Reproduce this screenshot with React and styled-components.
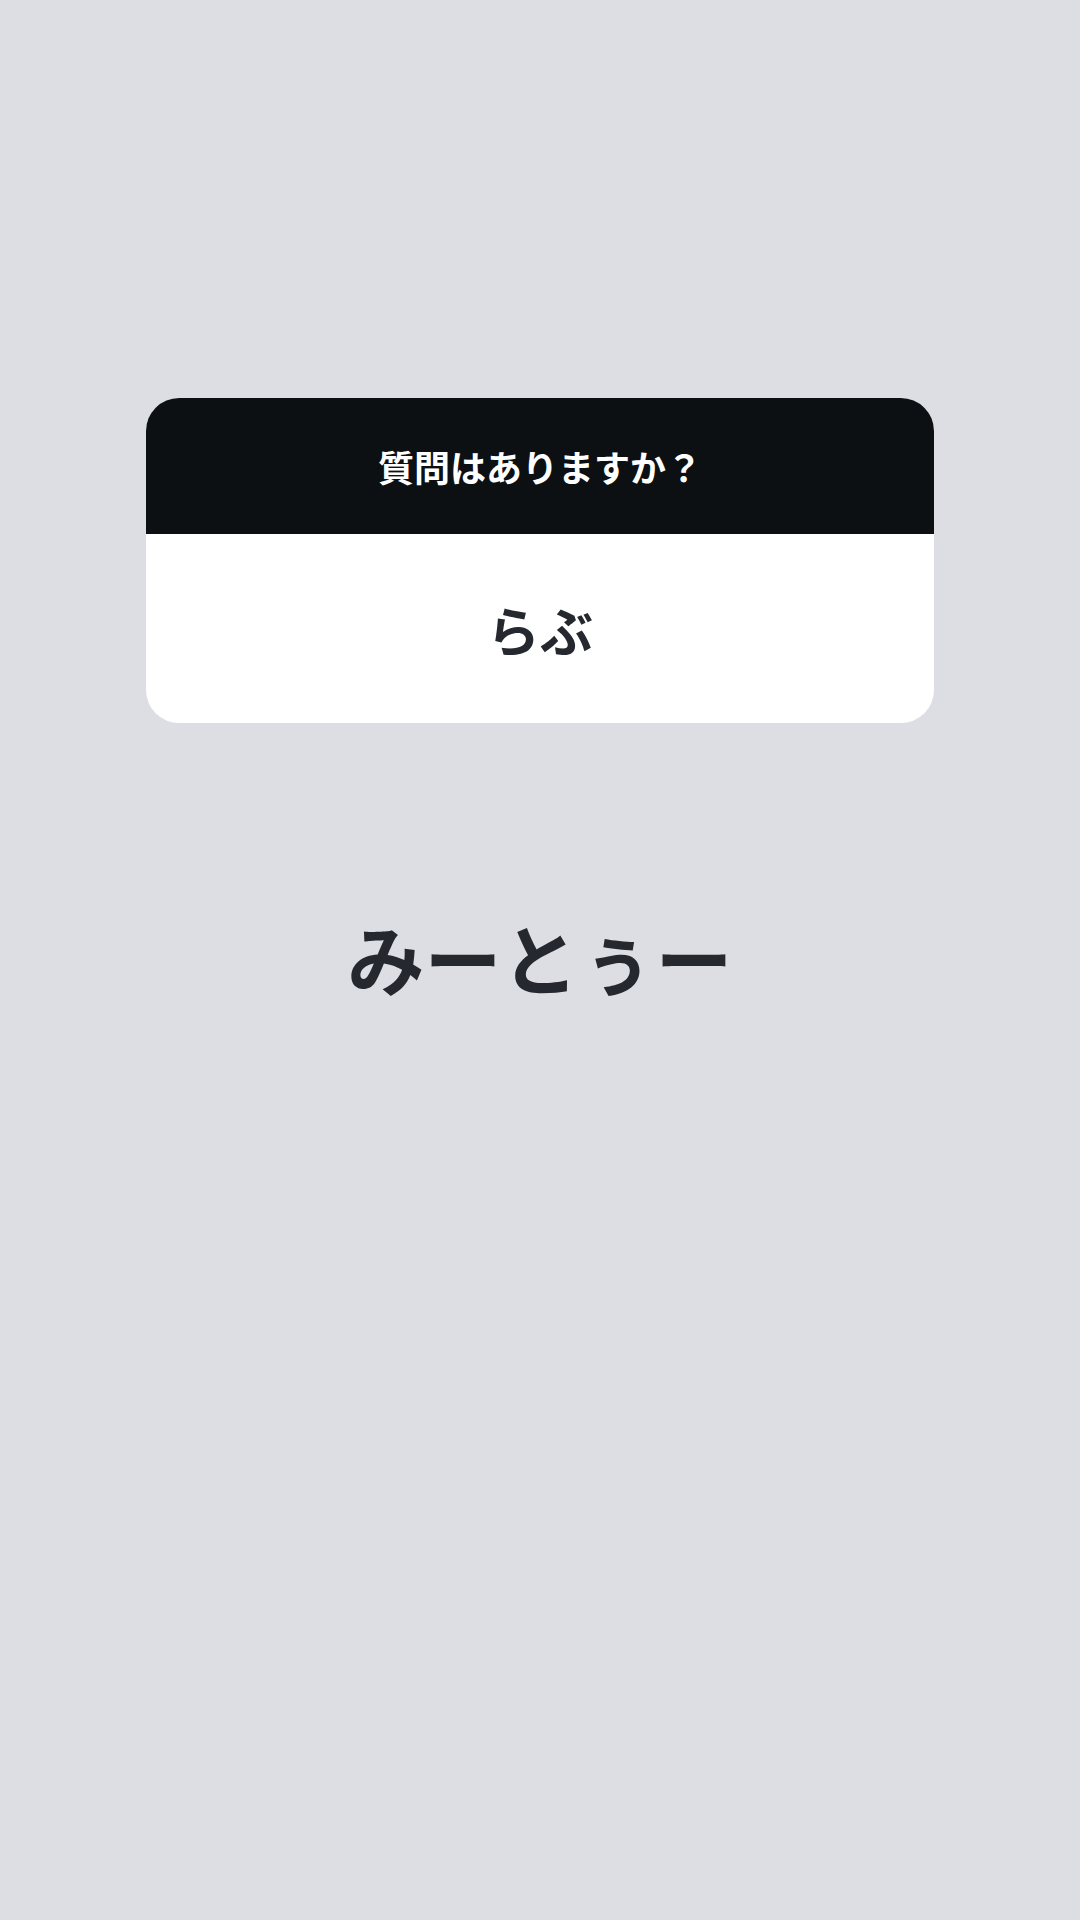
import React from "react";
import styled, { createGlobalStyle } from "styled-components";

const GlobalStyle = createGlobalStyle`
  html, body {
    margin: 0;
    padding: 0;
    background: #dcdee3;
  }
  body {
    font-family: "Noto Sans CJK JP", "Noto Sans", sans-serif;
  }
`;

function App() {
  return (
    <>
      <GlobalStyle />
      <Page>
        <Card>
          <CardHeader>質問はありますか？</CardHeader>
          <CardBody>らぶ</CardBody>
        </Card>
        <Caption>みーとぅー</Caption>
      </Page>
    </>
  );
}

export default App;

const Page = styled.div`
  width: 1080px;
  height: 1920px;
  box-sizing: border-box;
  padding-top: 398px;
  display: flex;
  flex-direction: column;
  align-items: center;
`;

const Card = styled.div`
  width: 788px;
  height: 325px;
  border-radius: 33px;
  overflow: hidden;
  background: #ffffff;
  display: flex;
  flex-direction: column;
`;

const CardHeader = styled.div`
  height: 136px;
  background: #0d1013;
  color: #ffffff;
  font-size: 36px;
  font-weight: 700;
  display: flex;
  align-items: center;
  justify-content: center;
`;

const CardBody = styled.div`
  flex: 1;
  color: #25282e;
  font-size: 53px;
  font-weight: 700;
  display: flex;
  align-items: center;
  justify-content: center;
`;

const Caption = styled.div`
  margin-top: 188px;
  color: #25282e;
  font-size: 77px;
  font-weight: 700;
  line-height: 1.2;
`;
